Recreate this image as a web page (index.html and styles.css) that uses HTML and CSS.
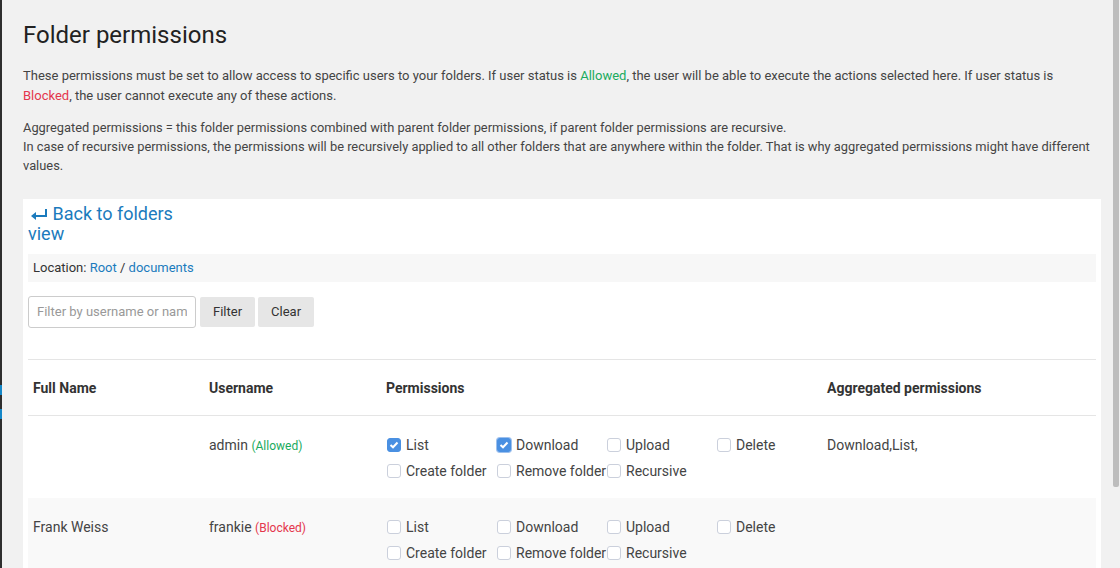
FILE: index.html
```html
<!DOCTYPE html>
<html lang="en">
<head>
  <meta charset="UTF-8">
  <meta name="viewport" content="width=device-width, initial-scale=1.0">
  <title>Folder permissions</title>
  <link rel="stylesheet" href="styles.css">
</head>

<body>
  <div class="rail"></div>
  <div class="page">
    <h1>Folder permissions</h1>
    <p class="intro">These permissions must be set to allow access to specific users to your folders. If user status is <span class="allowed">Allowed</span>, the user will be able to execute the actions selected here. If user status is <span class="blocked">Blocked</span>, the user cannot execute any of these actions.</p>
    <p class="note">Aggregated permissions = this folder permissions combined with parent folder permissions, if parent folder permissions are recursive.<br>In case of recursive permissions, the permissions will be recursively applied to all other folders that are anywhere within the folder. That is why aggregated permissions might have different values.</p>

    <div class="panel">
      <div class="back-col">
        <a class="back-link" href="#">
          <svg class="back-icon" width="18" height="12" viewBox="0 0 18 12">
            <path d="M16 1 V8 H5" fill="none" stroke="currentColor" stroke-width="2"/>
            <path d="M1 8 L6 4 V12 Z" fill="currentColor"/>
          </svg>
          Back to folders view
        </a>
      </div>

      <div class="location">Location: <a href="#">Root</a> / <a href="#">documents</a></div>

      <form class="filter" onsubmit="return false;">
        <input type="text" class="filter-input" placeholder="Filter by username or name">
        <button class="btn">Filter</button>
        <button class="btn">Clear</button>
      </form>

      <table class="perm-table">
        <colgroup>
          <col class="col-name">
          <col class="col-user">
          <col class="col-perm">
          <col>
        </colgroup>
        <thead>
          <tr>
            <th>Full Name</th>
            <th>Username</th>
            <th>Permissions</th>
            <th>Aggregated permissions</th>
          </tr>
        </thead>
        <tbody id="userRows">
        </tbody>
      </table>
    </div>
  </div>

  <!-- page scrollbar thumb -->
  <div class="scroll-thumb"></div>

  <script>
    const actions = ['List', 'Download', 'Upload', 'Delete', 'Create folder', 'Remove folder', 'Recursive'];
    const users = [
      { name: '', username: 'admin', status: 'Allowed', perms: ['List', 'Download'], focus: 'Download', aggregated: 'Download,List,' },
      { name: 'Frank Weiss', username: 'frankie', status: 'Blocked', perms: [], aggregated: '' }
    ];

    const checkMark = '<svg width="10" height="8" viewBox="0 0 10 8"><path d="M1.5 4 L4 6.3 L8.5 1.5" fill="none" stroke="#fff" stroke-width="2"/></svg>';

    function renderRows() {
      const body = document.getElementById('userRows');
      body.innerHTML = '';
      users.forEach(user => {
        const row = body.insertRow();
        row.insertCell(0).innerText = user.name;
        row.insertCell(1).innerHTML = `${user.username} <span class="status ${user.status.toLowerCase()}">(${user.status})</span>`;
        const boxes = actions.map(action => {
          const on = user.perms.includes(action);
          const cls = 'box' + (on ? ' on' : '') + (user.focus === action ? ' focus' : '');
          return `<label class="perm"><span class="${cls}">${on ? checkMark : ''}</span>${action}</label>`;
        }).join('');
        row.insertCell(2).innerHTML = `<div class="perm-grid">${boxes}</div>`;
        row.insertCell(3).innerText = user.aggregated;
      });
    }

    renderRows();
  </script>
</body>
</html>
```

FILE: styles.css
```css
html {
  background-color: #f1f1f1;
}

body {
  font-family: Roboto, 'Liberation Sans', sans-serif;
  font-size: 13px;
  line-height: 19.5px;
  color: #444;
  margin: 0;
  padding: 0;
  display: flex;
  background-color: #f1f1f1;
}

.rail {
  width: 2px;
  flex-shrink: 0;
  background: linear-gradient(to bottom,
    #2e2e2e 385px, #1487c8 385px, #1487c8 395px,
    #2e2e2e 395px, #2e2e2e 409px, #1487c8 409px,
    #1487c8 419px, #2e2e2e 419px);
}

.scroll-thumb {
  position: fixed;
  top: 0;
  right: 1px;
  width: 6px;
  height: 487px;
  background-color: #bdbdbd;
  border-radius: 0 0 2px 2px;
}

.page {
  flex: 1;
  padding: 22px 19px 77px 21px;
}

h1 {
  font-size: 24px;
  font-weight: 400;
  line-height: 26px;
  color: #222;
  margin: 0 0 18px;
}

p {
  margin: 0 4px 13px 0;
}

.note {
  font-size: 12.85px;
  line-height: 19.2px;
}

.allowed {
  color: #1aab5e;
}

.blocked {
  color: #e4364c;
}

a {
  color: #1b7bbd;
  text-decoration: none;
}

.panel {
  background-color: #fff;
  margin-top: 23px;
  padding: 5px;
}

.back-col {
  width: 160px;
  font-size: 18px;
  line-height: 20px;
}

.back-icon {
  margin-left: 2px;
  vertical-align: 0;
}

.location {
  background-color: #f7f7f7;
  margin-top: 10px;
  padding: 4px 5px 4px;
  line-height: 20px;
  color: #333;
}

.filter {
  display: flex;
  align-items: center;
  margin-top: 14px;
}

.filter-input {
  width: 168px;
  height: 32px;
  box-sizing: border-box;
  border: 1px solid #ccc;
  border-radius: 3px;
  padding: 0 8px;
  font-family: inherit;
  font-size: 13px;
  color: #444;
}

.filter-input::placeholder {
  color: #999;
}

.btn {
  height: 30px;
  margin-left: 4px;
  padding: 0 13px;
  border: none;
  border-radius: 2px;
  background-color: #e6e6e6;
  font-family: inherit;
  font-size: 13px;
  color: #333;
  cursor: pointer;
}

.btn + .btn {
  margin-left: 3px;
}

.perm-table {
  width: 100%;
  margin-top: 31px;
  border-collapse: collapse;
  table-layout: fixed;
  border-top: 1px solid #e5e5e5;
  font-size: 14px;
}

.col-name {
  width: 176px;
}

.col-user {
  width: 177px;
}

.col-perm {
  width: 441px;
}

.perm-table th {
  text-align: left;
  font-weight: 700;
  color: #333;
  line-height: 20px;
  padding: 18px 5px 17px;
  border-bottom: 1px solid #e5e5e5;
}

.perm-table td {
  line-height: 26px;
  padding: 16px 5px 14px;
  vertical-align: top;
  color: #444;
}

.perm-table tbody tr:nth-child(even) {
  background-color: #f9f9f9;
}

.status {
  font-size: 12px;
}

.status.allowed {
  color: #1aab5e;
}

.status.blocked {
  color: #e4364c;
}

.perm-grid {
  display: grid;
  grid-template-columns: repeat(4, 110px);
}

.perm {
  display: flex;
  align-items: center;
  white-space: nowrap;
}

.box {
  width: 14px;
  height: 14px;
  box-sizing: border-box;
  margin: 0 5px 0 1px;
  border: 1px solid #cbd0dc;
  border-radius: 3px;
  background-color: #fff;
  display: flex;
  align-items: center;
  justify-content: center;
  flex-shrink: 0;
}

.box.on {
  background-color: #4a90e2;
  border-color: #4a90e2;
}

.box.focus {
  box-shadow: 0 0 0 1px #9cc0ee;
}
```
